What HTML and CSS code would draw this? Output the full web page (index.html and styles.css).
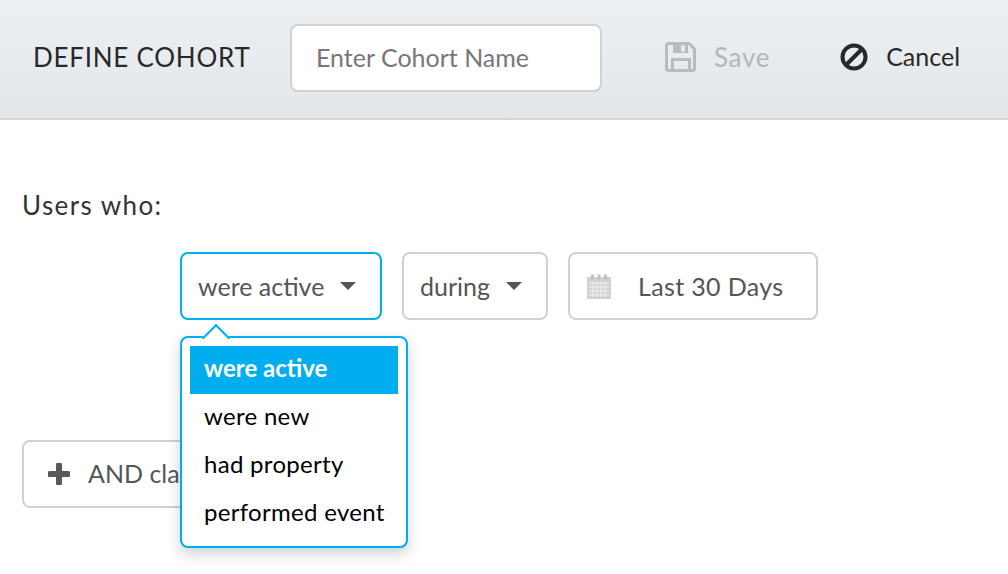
FILE: index.html
```html
<!DOCTYPE html>
<html lang="en">

<head>
    <meta charset="UTF-8">
    <title>Define Cohort</title>
    <link rel="stylesheet" href="styles.css">
</head>

<body>
    <header class="topbar">
        <h1>DEFINE COHORT</h1>
        <input class="cohort-name" type="text" placeholder="Enter Cohort Name">
        <div class="action save">
            <svg width="32" height="32" viewBox="0 0 32 32">
                <path d="M3 2.5h21l5.500 5.500v20a1.500 1.500 0 0 1-1.500 1.500H3A1.500 1.500 0 0 1 1.500 28V4A1.500 1.500 0 0 1 3 2.500z" fill="none" stroke="#b9bcbf" stroke-width="3"/>
                <path d="M8 3h15v9H8z" fill="#b9bcbf"/>
                <path d="M16 4.500h4v6h-4z" fill="#e9ecef"/>
                <path d="M7.500 28V18.500h17V28" fill="none" stroke="#b9bcbf" stroke-width="3"/>
            </svg>
            <span>Save</span>
        </div>
        <div class="action cancel">
            <svg width="28" height="28" viewBox="0 0 28 28">
                <circle cx="14" cy="14" r="11.500" fill="none" stroke="#26292b" stroke-width="4"/>
                <path d="M7 21L21 7" stroke="#26292b" stroke-width="4"/>
            </svg>
            <span>Cancel</span>
        </div>
    </header>

    <main class="content">
        <p class="users-label">Users who:</p>

        <div class="filter-row">
            <div class="select-wrap">
                <div class="control select active">
                    <span>were active</span>
                    <i class="caret"></i>
                </div>
                <div class="menu">
                    <div class="menu-item selected">were active</div>
                    <div class="menu-item">were new</div>
                    <div class="menu-item">had property</div>
                    <div class="menu-item">performed event</div>
                </div>
            </div>
            <div class="control select during">
                <span>during</span>
                <i class="caret"></i>
            </div>
            <div class="control date">
                <svg width="26" height="26" viewBox="0 0 26 26">
                    <path d="M1 4h24v22H1z" fill="#cfd1d2"/>
                    <path d="M5 1.500h3v5H5zM11.500 1.500h3v5h-3zM18 1.500h3v5h-3z" fill="#bfc1c2"/>
                    <path d="M3 10h20M3 14h20M3 18h20M3 22h20M7 9v15M11 9v15M15 9v15M19 9v15" stroke="#f1f1f1" stroke-width="1"/>
                </svg>
                <span>Last 30 Days</span>
            </div>
        </div>

        <div class="control add-clause">
            <svg width="22" height="22" viewBox="0 0 22 22">
                <path d="M11 2v18M2 11h18" stroke="#58595b" stroke-width="6" stroke-linecap="round"/>
            </svg>
            <span>AND clause</span>
        </div>
    </main>
</body>

</html>
```

FILE: styles.css
```css
* {
    box-sizing: border-box;
}

body {
    margin: 0;
    height: 574px;
    overflow: hidden;
    background-color: #fff;
    font-family: Lato, "Open Sans", sans-serif;
    color: #555;
}

.topbar {
    display: flex;
    align-items: center;
    height: 120px;
    padding: 0 0 2px 33px;
    background: linear-gradient(#edf0f3, #e4e7ea);
    border-bottom: 2px solid #d3d5d7;
}

.topbar h1 {
    margin: 0 0 2px;
    width: 257px;
    font-size: 26px;
    font-weight: 400;
    letter-spacing: 0.75px;
    color: #26292b;
}

.cohort-name {
    width: 312px;
    height: 68px;
    padding: 0 24px 3px;
    border: 2px solid #cfd1d3;
    border-radius: 8px;
    font-family: inherit;
    font-size: 25px;
    color: #555;
    background-color: #fff;
}

.cohort-name::placeholder {
    color: #777;
    opacity: 1;
}

.action {
    display: flex;
    align-items: center;
    margin-bottom: 2px;
    font-size: 26px;
}

.save {
    margin-left: 63px;
    gap: 17px;
    letter-spacing: 0.7px;
    color: #b4b7b9;
}

.cancel {
    margin-left: 70px;
    gap: 18px;
    font-size: 25px;
    color: #26292b;
}

.cancel span {
    margin-bottom: 3px;
}

.content {
    padding: 68px 0 0 22px;
}

.users-label {
    margin: 0;
    font-size: 26px;
    line-height: 34px;
    letter-spacing: 1.4px;
    color: #333;
}

.filter-row {
    display: flex;
    gap: 20px;
    margin: 30px 0 0 158px;
}

.select-wrap {
    position: relative;
}

.control {
    display: flex;
    align-items: center;
    height: 68px;
    border: 2px solid #cfd1d2;
    border-radius: 8px;
    background-color: #fff;
    font-size: 25px;
    color: #555;
}

.select {
    padding: 0 16px;
    gap: 16px;
}

.active {
    width: 202px;
    border-color: #00aeef;
}

.during {
    width: 146px;
}

.caret {
    width: 0;
    height: 0;
    border-left: 8px solid transparent;
    border-right: 8px solid transparent;
    border-top: 8px solid #555;
}

.date {
    width: 250px;
    padding: 0 16px;
    gap: 26px;
    letter-spacing: 0.35px;
}

.add-clause {
    width: 220px;
    margin-top: 120px;
    padding: 0 0 0 24px;
    gap: 18px;
}

.add-clause span {
    margin-bottom: 3px;
}

.menu {
    position: absolute;
    top: 84px;
    left: 0;
    z-index: 2;
    width: 228px;
    height: 212px;
    padding: 8px;
    background-color: #fff;
    border: 2px solid #00aeef;
    border-radius: 8px;
    box-shadow: 0 6px 14px rgba(60, 70, 80, 0.25);
}

/* little arrow pointing at the select */
.menu::before {
    content: "";
    position: absolute;
    top: -10px;
    left: 24px;
    width: 18px;
    height: 18px;
    background-color: #fff;
    border-top: 2px solid #00aeef;
    border-left: 2px solid #00aeef;
    transform: rotate(45deg);
}

.menu-item {
    position: relative;
    height: 48px;
    padding-left: 14px;
    font-size: 24px;
    line-height: 43px;
    letter-spacing: 0.3px;
    color: #000;
}

.selected {
    background-color: #00aeef;
    color: #fff;
    font-weight: 700;
    letter-spacing: 0;
}
```
